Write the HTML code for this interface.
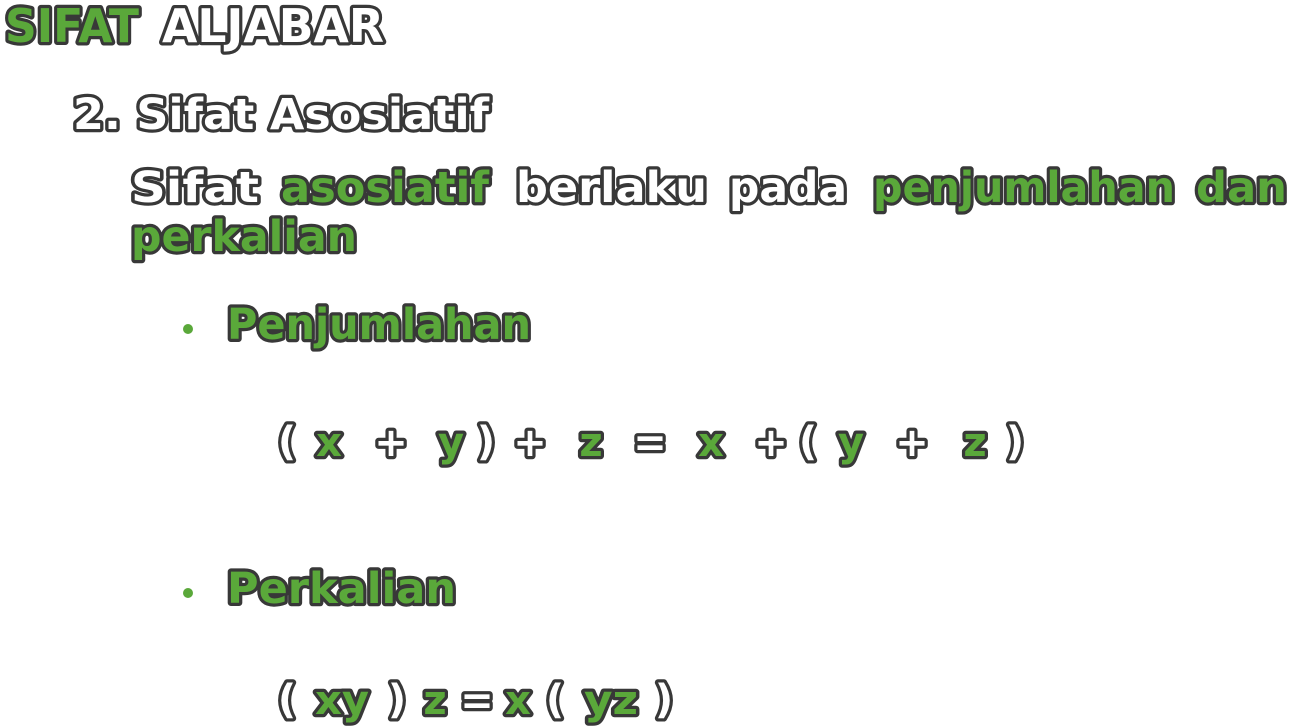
<!DOCTYPE html>
<html><head><meta charset="utf-8"><style>
html,body{margin:0;padding:0;background:#fff;}
svg{display:block}
text{font-family:"DejaVu Sans","Liberation Sans",sans-serif;font-weight:bold;stroke:#383838;stroke-width:6.5px;stroke-linejoin:round;paint-order:stroke fill;}
.g{fill:#5aa83a}.w{fill:#fff}
</style></head><body>
<svg width="1290" height="727" viewBox="0 0 1290 727">
<g font-size="46">
<text class="g" x="5" y="42" textLength="134" lengthAdjust="spacingAndGlyphs">SIFAT</text>
<text class="w" x="162" y="42" textLength="222" lengthAdjust="spacingAndGlyphs">ALJABAR</text>
</g>
<g font-size="43">
<text class="w" x="73" y="129" textLength="416" lengthAdjust="spacingAndGlyphs">2. Sifat Asosiatif</text>
<text class="w" x="131" y="202" textLength="128" lengthAdjust="spacingAndGlyphs">Sifat</text>
<text class="g" x="281" y="202" textLength="208" lengthAdjust="spacingAndGlyphs">asosiatif</text>
<text class="w" x="516" y="202" textLength="191" lengthAdjust="spacingAndGlyphs">berlaku</text>
<text class="w" x="729" y="202" textLength="118" lengthAdjust="spacingAndGlyphs">pada</text>
<text class="g" x="873" y="202" textLength="302" lengthAdjust="spacingAndGlyphs">penjumlahan</text>
<text class="g" x="1196" y="202" textLength="91" lengthAdjust="spacingAndGlyphs">dan</text>
<text class="g" x="131" y="251" textLength="226" lengthAdjust="spacingAndGlyphs">perkalian</text>
<text class="g" x="227" y="339" textLength="304" lengthAdjust="spacingAndGlyphs">Penjumlahan</text>
<text class="g" x="227" y="603" textLength="229" lengthAdjust="spacingAndGlyphs">Perkalian</text>
</g>
<circle cx="188" cy="329" r="5" fill="#5aa83a"/>
<circle cx="188" cy="593" r="5" fill="#5aa83a"/>
<g font-size="40" text-anchor="middle">
<text class="w" x="287" y="455">(</text>
<text class="g" x="329" y="456">x</text>
<text class="w" x="391" y="456">+</text>
<text class="g" x="451" y="456">y</text>
<text class="w" x="486" y="455">)</text>
<text class="w" x="530" y="456">+</text>
<text class="g" x="591" y="456">z</text>
<text class="w" x="650" y="456">=</text>
<text class="g" x="711" y="456">x</text>
<text class="w" x="771" y="456">+</text>
<text class="w" x="808" y="455">(</text>
<text class="g" x="851" y="456">y</text>
<text class="w" x="912" y="456">+</text>
<text class="g" x="975" y="456">z</text>
<text class="w" x="1015" y="455">)</text>

<text class="w" x="287" y="713">(</text>
<text class="g" x="342" y="714" textLength="54" lengthAdjust="spacingAndGlyphs">xy</text>
<text class="w" x="397" y="713">)</text>
<text class="g" x="435" y="714">z</text>
<text class="w" x="477" y="714">=</text>
<text class="g" x="518" y="714">x</text>
<text class="w" x="555" y="713">(</text>
<text class="g" x="611" y="714" textLength="54" lengthAdjust="spacingAndGlyphs">yz</text>
<text class="w" x="664" y="713">)</text>
</g>
</svg>
</body></html>
